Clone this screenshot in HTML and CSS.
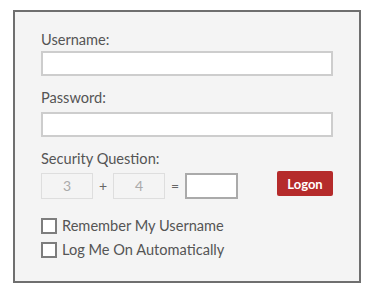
FILE: index.html
```html
<!DOCTYPE html>
<html lang="en">
<head>
  <meta charset="UTF-8" />
  <title>Logon</title>
  <link rel="stylesheet" href="styles.css">
</head>
<body>

  <form class="panel">
    <label class="label first">Username:</label>
    <input class="field user" type="text" />

    <label class="label">Password:</label>
    <input class="field pass" type="password" />

    <label class="label">Security Question:</label>
    <div class="captcha">
      <span class="num">3</span>
      <span class="op plus">+</span>
      <span class="num">4</span>
      <span class="op eq">=</span>
      <input class="answer" type="text" />
      <button class="logon" type="button">Logon</button>
    </div>

    <div class="check first-check">
      <span class="box"></span>
      <span>Remember My Username</span>
    </div>
    <div class="check">
      <span class="box"></span>
      <span>Log Me On Automatically</span>
    </div>
  </form>

</body>
</html>
```

FILE: styles.css
```css
body {
  margin: 0;
  background: white;
  font-family: Lato, "Open Sans", sans-serif;
  color: #555;
}

.panel {
  box-sizing: border-box;
  width: 348px;
  height: 273px;
  margin: 10px 0 0 13px;
  padding: 20px 26px 0;
  border: 2px solid #6f6f6f;
  background: #f4f4f4;
}

.label {
  display: block;
  font-size: 14.6px;
  line-height: 16px;
  margin-top: 14px;
}

.label.first {
  margin-top: 0;
}

.field {
  display: block;
  box-sizing: border-box;
  width: 292px;
  height: 25px;
  margin: 3px 0 0;
  border: 2px solid #cdcdcd;
  background: white;
}

.field.pass {
  margin-top: 6px;
}

.captcha {
  display: flex;
  align-items: flex-start;
  margin-top: 4px;
}

.num {
  box-sizing: border-box;
  width: 52px;
  height: 26px;
  margin-top: 2px;
  border: 1px solid #dedede;
  text-align: center;
  line-height: 24px;
  font-size: 14px;
  color: #aaa;
}

.op {
  width: 20px;
  margin-top: 2px;
  line-height: 26px;
  text-align: center;
  font-size: 14px;
  color: #666;
}

.answer {
  box-sizing: border-box;
  width: 53px;
  height: 26px;
  margin: 2px 0 0;
  border: 2px solid #aaa;
  background: white;
}

.logon {
  width: 56px;
  height: 25px;
  margin-left: 39px;
  padding: 0;
  border: none;
  border-radius: 2px;
  background: #b52b2b;
  color: white;
  font-family: Lato, sans-serif;
  font-weight: bold;
  font-size: 13px;
}

.check {
  display: flex;
  align-items: center;
  gap: 5px;
  margin-top: 8px;
  font-size: 14.6px;
  line-height: 16px;
}

.first-check {
  margin-top: 19px;
}

.box {
  box-sizing: border-box;
  width: 16px;
  height: 16px;
  border: 2px solid #7d7d7d;
  background: white;
}
```
